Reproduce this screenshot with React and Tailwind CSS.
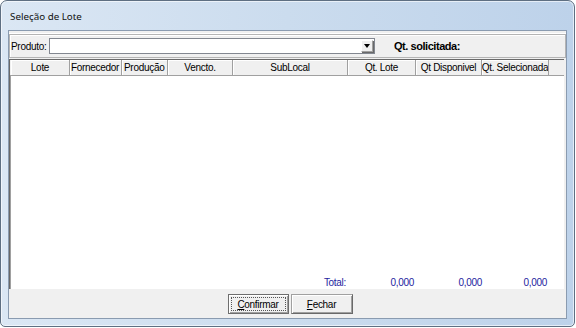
export default function App() {
  const cols = [
    { label: "Lote", w: 59, align: "justify-center" },
    { label: "Fornecedor", w: 52, align: "justify-start pl-[1px]" },
    { label: "Produção", w: 46, align: "justify-start pl-[2px]" },
    { label: "Vencto.", w: 65, align: "justify-center" },
    { label: "SubLocal", w: 115, align: "justify-center" },
    { label: "Qt. Lote", w: 68, align: "justify-center" },
    { label: "Qt Disponivel", w: 66, align: "justify-center" },
    { label: "Qt. Selecionada", w: 67, align: "justify-center" },
  ];

  return (
    <div className="w-[576px] h-[328px] bg-white font-['Liberation_Sans',Arial,sans-serif] text-[10px] tracking-[-0.3px] text-black overflow-hidden">
      <div className="w-[575px] h-[327px] rounded-t-[7px] rounded-b-[5px] border border-[#5e6f82] bg-gradient-to-r from-[#dbe7f4] via-[#cbdcee] to-[#bdd2ea] shadow-[inset_0_0_0_1px_rgba(255,255,255,0.6)] flex flex-col px-[7px] pb-[7px]">
        <div className="h-[29px] flex items-center pl-[2px] pt-[4px] font-['Noto_Sans',sans-serif] text-[9.8px] tracking-normal text-[#111]">
          Seleção de Lote
        </div>

        <div className="flex-1 bg-[#f0f0f0] border border-[#8a9bb0] flex flex-col">
          <div className="h-[3px] border-b border-white" />

          <div className="h-[24px] border border-[#b4b4b4] shadow-[inset_1px_1px_0_#fff] flex items-center">
            <span className="ml-[1px] w-[38px]">Produto:</span>
            <div className="w-[326px] h-[16px] bg-white border border-[#828790] flex justify-end items-center pr-[1px]">
              <div className="w-[12px] h-[12px] bg-[#f0f0f0] border border-[#a0a0a0] border-t-white border-l-white shadow-[1px_1px_0_#696969] flex items-center justify-center">
                <div className="w-0 h-0 border-l-[3.5px] border-r-[3.5px] border-t-[4px] border-l-transparent border-r-transparent border-t-black" />
              </div>
            </div>
            <span className="ml-[19px] font-bold text-[11px] tracking-[-0.45px]">Qt. solicitada:</span>
          </div>

          <div className="h-[1px]" />

          <div className="flex-1 mr-[2px] flex flex-col border-l border-t border-[#696969] shadow-[inset_1px_1px_0_#a0a0a0] bg-white">
            <div className="h-[16px] flex bg-[#f0f0f0] border-b border-[#a0a0a0]">
              <div className="w-[1px]" />
              {cols.map((c) => (
                <div
                  key={c.label}
                  style={{ width: c.w }}
                  className={`h-full flex items-center whitespace-nowrap overflow-hidden border-r border-[#a0a0a0] shadow-[inset_1px_1px_0_#fff] ${c.align}`}
                >
                  {c.label}
                </div>
              ))}
              <div className="flex-1" />
            </div>

            <div className="flex-1 flex flex-col justify-end">
              <div className="h-[13px] flex items-center text-[#23239e]">
                <div className="w-[338px] text-right pr-[2px]">Total:</div>
                <div className="w-[68px] text-right pr-[2px]">0,000</div>
                <div className="w-[66px] text-right">0,000</div>
                <div className="w-[67px] text-right pr-[2px]">0,000</div>
              </div>
            </div>
          </div>

          <div className="h-[29px] flex justify-center items-start pt-[5px] pl-[5px] gap-[2px]">
            <div className="w-[61px] h-[20px] border border-[#6e6e6e] bg-[#f0f0f0] shadow-[inset_1px_1px_0_#fff,inset_-1px_-1px_0_#a0a0a0] p-[2px]">
              <div className="w-full h-full border border-dotted border-[#555] flex items-center justify-center">
                <span><span className="underline">C</span>onfirmar</span>
              </div>
            </div>
            <div className="w-[62px] h-[20px] border border-[#a0a0a0] border-r-[#696969] border-b-[#696969] bg-[#f0f0f0] shadow-[inset_1px_1px_0_#fff,inset_-1px_-1px_0_#a0a0a0] flex items-center justify-center">
              <span><span className="underline">F</span>echar</span>
            </div>
          </div>
        </div>
      </div>
    </div>
  );
}
